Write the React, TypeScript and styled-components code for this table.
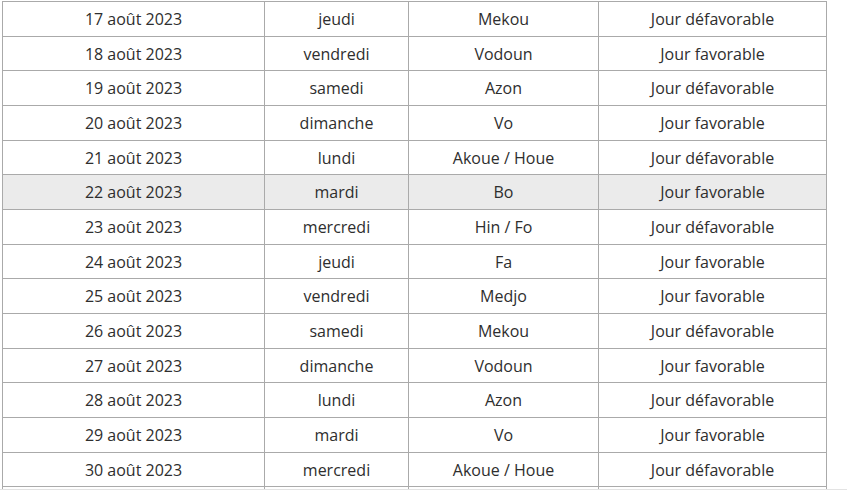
import React from "react";
import styled, { createGlobalStyle } from "styled-components";

const Global = createGlobalStyle`
  html, body { margin: 0; padding: 0; background: #ffffff; }
  body { font-family: "Open Sans", "Noto Sans", sans-serif; }
`;

const Viewport = styled.div`
  height: 490px;
  overflow: hidden;
  border-bottom: 1px solid #e3e3e3;
  padding: 1px 0 0 2px;
  box-sizing: border-box;
`;

const Table = styled.table`
  border-collapse: collapse;
  table-layout: fixed;
  width: 825px;
`;

const Col = styled.col<{ $w: number }>`
  width: ${(p) => p.$w}px;
`;

const Row = styled.tr<{ $hl?: boolean }>`
  background: ${(p) => (p.$hl ? "#ebebeb" : "#ffffff")};
`;

const Cell = styled.td`
  border: 1px solid #aaaaaa;
  padding: 6px 4px 4px;
  height: 23.667px;
  line-height: 23.667px;
  text-align: center;
  font-size: 16px;
  color: #2e2e2e;
  white-space: nowrap;
  box-sizing: content-box;
`;

const widths = [262, 144, 190, 228];

const rows: [string, string, string, string][] = [
  ["17 août 2023", "jeudi", "Mekou", "Jour défavorable"],
  ["18 août 2023", "vendredi", "Vodoun", "Jour favorable"],
  ["19 août 2023", "samedi", "Azon", "Jour défavorable"],
  ["20 août 2023", "dimanche", "Vo", "Jour favorable"],
  ["21 août 2023", "lundi", "Akoue / Houe", "Jour défavorable"],
  ["22 août 2023", "mardi", "Bo", "Jour favorable"],
  ["23 août 2023", "mercredi", "Hin / Fo", "Jour défavorable"],
  ["24 août 2023", "jeudi", "Fa", "Jour favorable"],
  ["25 août 2023", "vendredi", "Medjo", "Jour favorable"],
  ["26 août 2023", "samedi", "Mekou", "Jour défavorable"],
  ["27 août 2023", "dimanche", "Vodoun", "Jour favorable"],
  ["28 août 2023", "lundi", "Azon", "Jour défavorable"],
  ["29 août 2023", "mardi", "Vo", "Jour favorable"],
  ["30 août 2023", "mercredi", "Akoue / Houe", "Jour défavorable"],
  ["", "", "", ""],
];

export default function App() {
  return (
    <>
      <Global />
      <Viewport>
        <Table>
          <colgroup>
            {widths.map((w, i) => (
              <Col key={i} $w={w} />
            ))}
          </colgroup>
          <tbody>
            {rows.map((r, i) => (
              <Row key={i} $hl={i === 5}>
                {r.map((c, j) => (
                  <Cell key={j}>{c}</Cell>
                ))}
              </Row>
            ))}
          </tbody>
        </Table>
      </Viewport>
    </>
  );
}
